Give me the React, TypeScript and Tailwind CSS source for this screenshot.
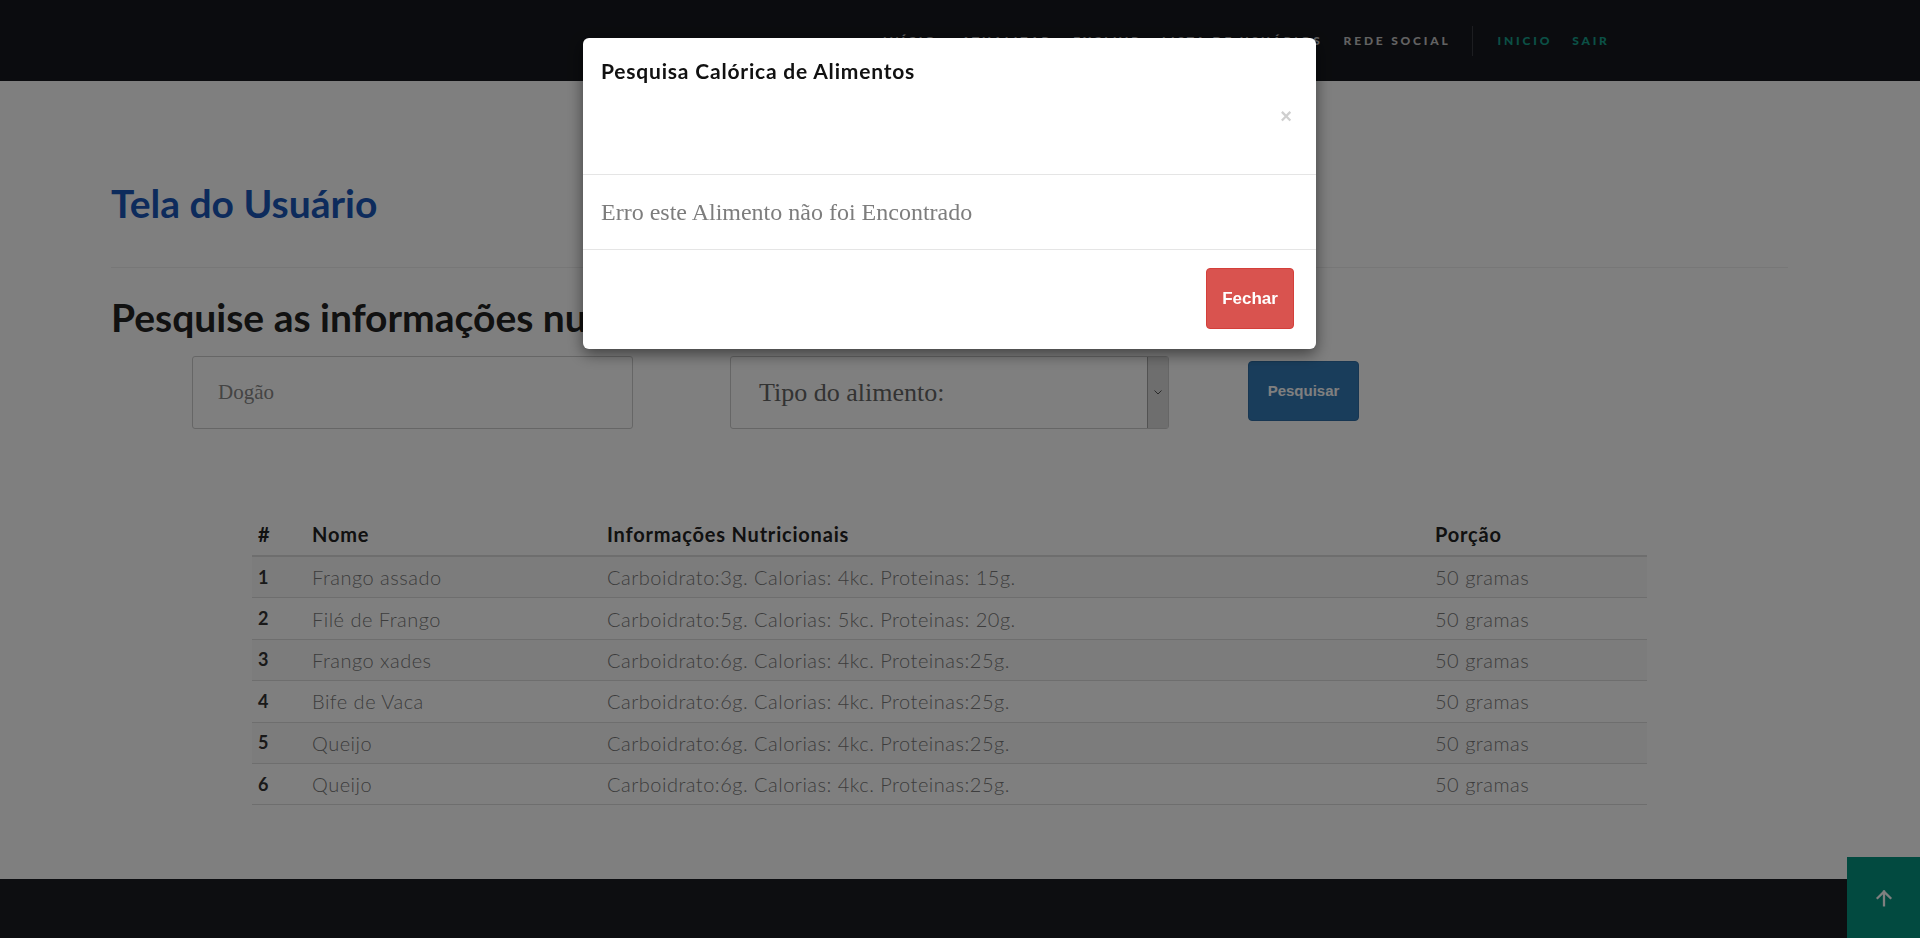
import React from 'react';

interface Alimento {
  id: number;
  nome: string;
  info: string;
  porcao: string;
}

const alimentos: Alimento[] = [
  { id: 1, nome: 'Frango assado', info: 'Carboidrato:3g. Calorias: 4kc. Proteinas: 15g.', porcao: '50 gramas' },
  { id: 2, nome: 'Filé de Frango', info: 'Carboidrato:5g. Calorias: 5kc. Proteinas: 20g.', porcao: '50 gramas' },
  { id: 3, nome: 'Frango xades', info: 'Carboidrato:6g. Calorias: 4kc. Proteinas:25g.', porcao: '50 gramas' },
  { id: 4, nome: 'Bife de Vaca', info: 'Carboidrato:6g. Calorias: 4kc. Proteinas:25g.', porcao: '50 gramas' },
  { id: 5, nome: 'Queijo', info: 'Carboidrato:6g. Calorias: 4kc. Proteinas:25g.', porcao: '50 gramas' },
  { id: 6, nome: 'Queijo', info: 'Carboidrato:6g. Calorias: 4kc. Proteinas:25g.', porcao: '50 gramas' },
];

const sans = "font-['Lato','Open_Sans',sans-serif]";
const serif = "font-['Liberation_Serif','DejaVu_Serif',serif]";

const Navbar: React.FC = () => (
  <nav className={`h-[81px] bg-[#17191e] flex items-center pl-[883px] text-[12px] font-black tracking-[2.8px] uppercase ${sans}`}>
    <span className="text-[#c4c4c4]">Início</span>
    <span className="ml-[24px] text-[#c4c4c4]">Atualizar</span>
    <span className="ml-[21px] text-[#c4c4c4]">Excluir</span>
    <span className="ml-[20px] text-[#c4c4c4]">Lista de Usuários</span>
    <span className="ml-[21px] text-[#c4c4c4]">Rede Social</span>
    <span className="ml-[21px] w-px h-[30px] bg-[#3a3c42]" />
    <span className="ml-[25px] text-[#16a08c]">Inicio</span>
    <span className="ml-[20px] text-[#16a08c]">Sair</span>
  </nav>
);

const SearchRow: React.FC = () => (
  <div className="flex items-start mt-[17px] pl-[81px]">
    <div className={`w-[441px] h-[73px] border border-[#ccc] rounded-[3px] bg-white flex items-center pl-[25px] text-[21px] text-[#888] ${serif}`}>
      Dogão
    </div>
    <div className={`ml-[97px] w-[439px] h-[73px] border border-[#ccc] rounded-[3px] bg-white flex items-center ${serif}`}>
      <span className="flex-1 pl-[28px] text-[26px] text-[#666]">Tipo do alimento:</span>
      <span className="w-[21px] h-full bg-[#dcdcdc] border-l border-[#a5a5a5] flex items-center justify-center">
        <svg width="8" height="5" viewBox="0 0 8 5" fill="none" stroke="#555" strokeWidth="1">
          <path d="M0.5 0.5 L4 4 L7.5 0.5" />
        </svg>
      </span>
    </div>
    <button className="ml-[79px] mt-[5px] w-[111px] h-[60px] bg-[#337ab7] border border-[#2e6da4] rounded-[4px] text-white text-[15px] font-bold font-['Liberation_Sans',Arial,sans-serif]">
      Pesquisar
    </button>
  </div>
);

const TabelaAlimentos: React.FC = () => (
  <div className={`ml-[141px] mt-[84px] w-[1395px] ${sans}`}>
    <div className="flex h-[44px] items-center border-b-2 border-[#ddd] text-[20px] font-bold tracking-[0.8px] text-[#222]">
      <div className="w-[52px] pl-[6px]">#</div>
      <div className="w-[295px] pl-[8px]">Nome</div>
      <div className="w-[828px] pl-[8px]">Informações Nutricionais</div>
      <div className="flex-1 pl-[8px]">Porção</div>
    </div>
    {alimentos.map((a, i) => (
      <div
        key={a.id}
        className={`flex h-[41.4px] items-center border-b border-[#ddd] text-[20px] tracking-[0.5px] text-[#7a7a7a] ${i % 2 === 0 ? 'bg-[#f9f9f9]' : 'bg-white'}`}
      >
        <div className="w-[52px] pl-[6px] font-bold tracking-normal text-[18px] text-[#333]">{a.id}</div>
        <div className="w-[295px] pl-[8px] font-light">{a.nome}</div>
        <div className="w-[828px] pl-[8px] font-light">{a.info}</div>
        <div className="flex-1 pl-[8px] font-light">{a.porcao}</div>
      </div>
    ))}
  </div>
);

const Modal: React.FC = () => (
  <div className="fixed inset-0 z-20 bg-black/50">
    <div className="ml-[583px] mt-[38px] w-[733px] bg-white rounded-[6px] shadow-[0_5px_15px_rgba(0,0,0,0.5)]">
      <div className="h-[137px] px-[18px] pt-[21px] border-b border-[#e5e5e5]">
        <h4 className={`text-[21px] leading-[24px] font-bold tracking-[0.8px] text-[#111] ${sans}`}>Pesquisa Calórica de Alimentos</h4>
        <div className="flex justify-end mt-[21px] pr-[6px]">
          <span className="text-[20px] leading-[24px] font-bold text-[#cfcfcf] font-['Liberation_Sans',Arial,sans-serif]">×</span>
        </div>
      </div>
      <div className={`h-[75px] flex items-center px-[18px] text-[24px] text-[#7d7d7d] border-b border-[#e5e5e5] ${serif}`}>
        Erro este Alimento não foi Encontrado
      </div>
      <div className="h-[99px] flex justify-end pt-[18px] pr-[22px]">
        <button className="w-[88px] h-[61px] bg-[#d9534f] border border-[#d43f3a] rounded-[4px] text-white text-[17px] font-bold font-['Liberation_Sans',Arial,sans-serif]">
          Fechar
        </button>
      </div>
    </div>
  </div>
);

export default function App() {
  return (
    <div className="relative h-[938px] overflow-hidden bg-white">
      <Navbar />
      <main className="ml-[111px] w-[1677px]">
        <div className="pt-[100px]">
          <h1 className={`text-[39px] leading-[44px] font-bold text-[#1a57b8] ${sans}`}>Tela do Usuário</h1>
        </div>
        <hr className="mt-[42px] border-0 border-t border-[#eee]" />
        <h2 className={`mt-[27px] text-[39px] leading-[44px] font-bold text-[#222] ${sans}`}>
          Pesquise as informações nutricionais
        </h2>
        <SearchRow />
        <TabelaAlimentos />
      </main>
      <footer className="mt-[74px] h-[120px] bg-[#1a1c22]" />
      <button className="absolute right-0 bottom-0 w-[73px] h-[81px] bg-[#059480] flex items-center justify-center">
        <svg width="22" height="22" viewBox="0 0 24 24" fill="none" stroke="white" strokeWidth="2.5" strokeLinecap="square">
          <path d="M12 20 V5" />
          <path d="M5 12 L12 5 L19 12" />
        </svg>
      </button>
      <Modal />
    </div>
  );
}
